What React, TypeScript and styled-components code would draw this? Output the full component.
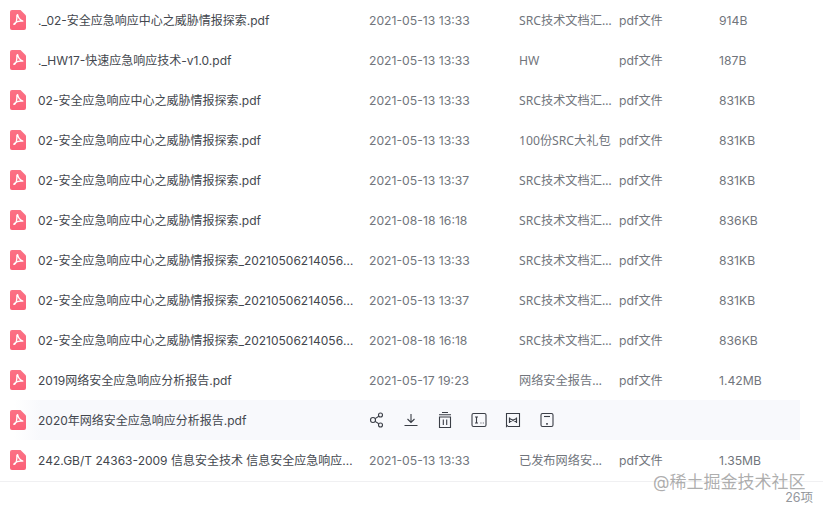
import styled, { createGlobalStyle } from "styled-components";

const GlobalStyle = createGlobalStyle`
  html, body {
    margin: 0;
    padding: 0;
    background: #fff;
    overflow: hidden;
  }
  * { box-sizing: border-box; }
`;

const Page = styled.div`
  position: relative;
  width: 823px;
  height: 506px;
  overflow: hidden;
  font-family: "Inter", "Noto Sans CJK SC", sans-serif;
  font-size: 12.2px;
  color: #71757c;
`;

const List = styled.div`
  display: flex;
  flex-direction: column;
  height: 482px;
  border-bottom: 1px solid #f0f0f2;
`;

const Row = styled.div<{ $hover?: boolean }>`
  display: grid;
  grid-template-columns: 16px 343px 150px 100px 100px 1fr;
  align-items: center;
  height: 40px;
  flex: none;
  margin-right: 23px;
  padding-left: 10px;
  line-height: 20px;
  background: ${(p) =>
    p.$hover ? "linear-gradient(90deg, #fff 0, #fff 14px, #f8f9fc 40px)" : "transparent"};
`;

const FileIcon = styled.svg`
  width: 16px;
  height: 20px;
  display: block;
`;

const Cell = styled.div`
  padding-top: 2px;
  white-space: nowrap;
  overflow: hidden;
  text-overflow: ellipsis;
`;

const Name = styled(Cell)`
  padding-left: 12px;
  padding-right: 14px;
  font-size: 12px;
  color: #43474e;
`;

const Source = styled(Cell)`
  padding-right: 7px;
  font-family: "Noto Sans", "Noto Sans CJK SC", sans-serif;
`;

const Actions = styled.div`
  grid-column: 3 / -1;
  display: flex;
  align-items: center;
  gap: 16px;
  margin-left: -1px;
`;

const ActionIcon = styled.svg`
  width: 18px;
  height: 18px;
  display: block;
  fill: none;
  stroke: #3a3e46;
  stroke-width: 1.1;
`;

const Watermark = styled.div`
  position: absolute;
  left: 653px;
  top: 471px;
  font-size: 17px;
  line-height: 22px;
  color: rgba(120, 120, 120, 0.6);
  white-space: nowrap;
`;

const Count = styled.div`
  position: absolute;
  right: 10px;
  top: 489px;
  font-size: 12.5px;
  line-height: 18px;
  color: #94979c;
`;

const PdfIcon = () => (
  <FileIcon viewBox="0 0 16 20">
    <defs>
      <linearGradient id="pdf-fill" x1="0" y1="0" x2="0" y2="1">
        <stop offset="0" stopColor="#fb7285" />
        <stop offset="1" stopColor="#fb6078" />
      </linearGradient>
    </defs>
    <path
      d="M2 0h8.5L16 5.5V18a2 2 0 0 1-2 2H2a2 2 0 0 1-2-2V2a2 2 0 0 1 2-2z"
      fill="url(#pdf-fill)"
    />
    <path
      d="M7.6 4.6c.5 2.8 1.8 5 5.2 6.6-2.8-.5-6.2.2-8.4 2.2-.8.8-.6 1.3.1 0.9C6 13.2 7 9 6.9 5.2"
      fill="none"
      stroke="#fff"
      strokeWidth="1.3"
      strokeLinecap="round"
      strokeLinejoin="round"
    />
  </FileIcon>
);

type FileRow = {
  name: string;
  date: string;
  source: string;
  size: string;
};

const longName = "02-安全应急响应中心之威胁情报探索_20210506214056897.pdf";
const baseName = "02-安全应急响应中心之威胁情报探索.pdf";
const srcDocs = "SRC技术文档汇总合集";

const rowsTop: FileRow[] = [
  { name: "._02-安全应急响应中心之威胁情报探索.pdf", date: "2021-05-13 13:33", source: srcDocs, size: "914B" },
  { name: "._HW17-快速应急响应技术-v1.0.pdf", date: "2021-05-13 13:33", source: "HW", size: "187B" },
  { name: baseName, date: "2021-05-13 13:33", source: srcDocs, size: "831KB" },
  { name: baseName, date: "2021-05-13 13:33", source: "100份SRC大礼包", size: "831KB" },
  { name: baseName, date: "2021-05-13 13:37", source: srcDocs, size: "831KB" },
  { name: baseName, date: "2021-08-18 16:18", source: srcDocs, size: "836KB" },
  { name: longName, date: "2021-05-13 13:33", source: srcDocs, size: "831KB" },
  { name: longName, date: "2021-05-13 13:37", source: srcDocs, size: "831KB" },
  { name: longName, date: "2021-08-18 16:18", source: srcDocs, size: "836KB" },
  { name: "2019网络安全应急响应分析报告.pdf", date: "2021-05-17 19:23", source: "网络安全报告合集汇总", size: "1.42MB" },
];

const lastRow: FileRow = {
  name: "242.GB/T 24363-2009 信息安全技术 信息安全应急响应计划规范.pdf",
  date: "2021-05-13 13:33",
  source: "已发布网络安全标准",
  size: "1.35MB",
};

const FileLine = ({ row }: { row: FileRow }) => (
  <Row>
    <PdfIcon />
    <Name>{row.name}</Name>
    <Cell>{row.date}</Cell>
    <Source>{row.source}</Source>
    <Cell>pdf文件</Cell>
    <Cell>{row.size}</Cell>
  </Row>
);

const HoverActions = () => (
  <Actions>
    <ActionIcon viewBox="0 0 18 18">
      <circle cx="5" cy="9" r="2.5" />
      <circle cx="12.5" cy="4" r="2" />
      <circle cx="12.5" cy="14" r="2" />
      <path d="M7.1 7.6l3.7-2.4M7.1 10.4l3.7 2.4" />
    </ActionIcon>
    <ActionIcon viewBox="0 0 18 18">
      <path d="M9 3v8.5M5.5 8l3.5 3.5L12.5 8M2.5 14.5h13" />
    </ActionIcon>
    <ActionIcon viewBox="0 0 18 18">
      <path d="M6 1.5h6M3 3.8h12M3.5 6h11v10.5h-11zM7.3 8.5v5.5M10.7 8.5v5.5" />
    </ActionIcon>
    <ActionIcon viewBox="0 0 18 18">
      <rect x="2" y="2.5" width="14" height="13" rx="1.5" />
      <path d="M5 6h3M6.5 6v6M5 12h3" />
      <path d="M10.5 12h.9M12.8 12h.9" />
    </ActionIcon>
    <ActionIcon viewBox="0 0 18 18">
      <path d="M3.8 15.5H15.5V2.5H2.5V15.5l1.3-1.2" />
      <path d="M5.5 6.5v5.5M12.5 6.5v5.5M5.5 7.5l7 3.5M12.5 7.5l-7 3.5" strokeWidth="1.2" />
    </ActionIcon>
    <ActionIcon viewBox="0 0 18 18">
      <rect x="3" y="2.5" width="12" height="13" rx="1.5" />
      <path d="M6 5.5h6" />
      <path d="M8.2 12.8h1.6" strokeWidth="1.8" />
    </ActionIcon>
  </Actions>
);

export default function App() {
  return (
    <Page>
      <GlobalStyle />
      <List>
        {rowsTop.map((row, i) => (
          <FileLine key={i} row={row} />
        ))}
        <Row $hover>
          <PdfIcon />
          <Name>2020年网络安全应急响应分析报告.pdf</Name>
          <HoverActions />
        </Row>
        <FileLine row={lastRow} />
      </List>
      <Watermark>@稀土掘金技术社区</Watermark>
      <Count>26项</Count>
    </Page>
  );
}
